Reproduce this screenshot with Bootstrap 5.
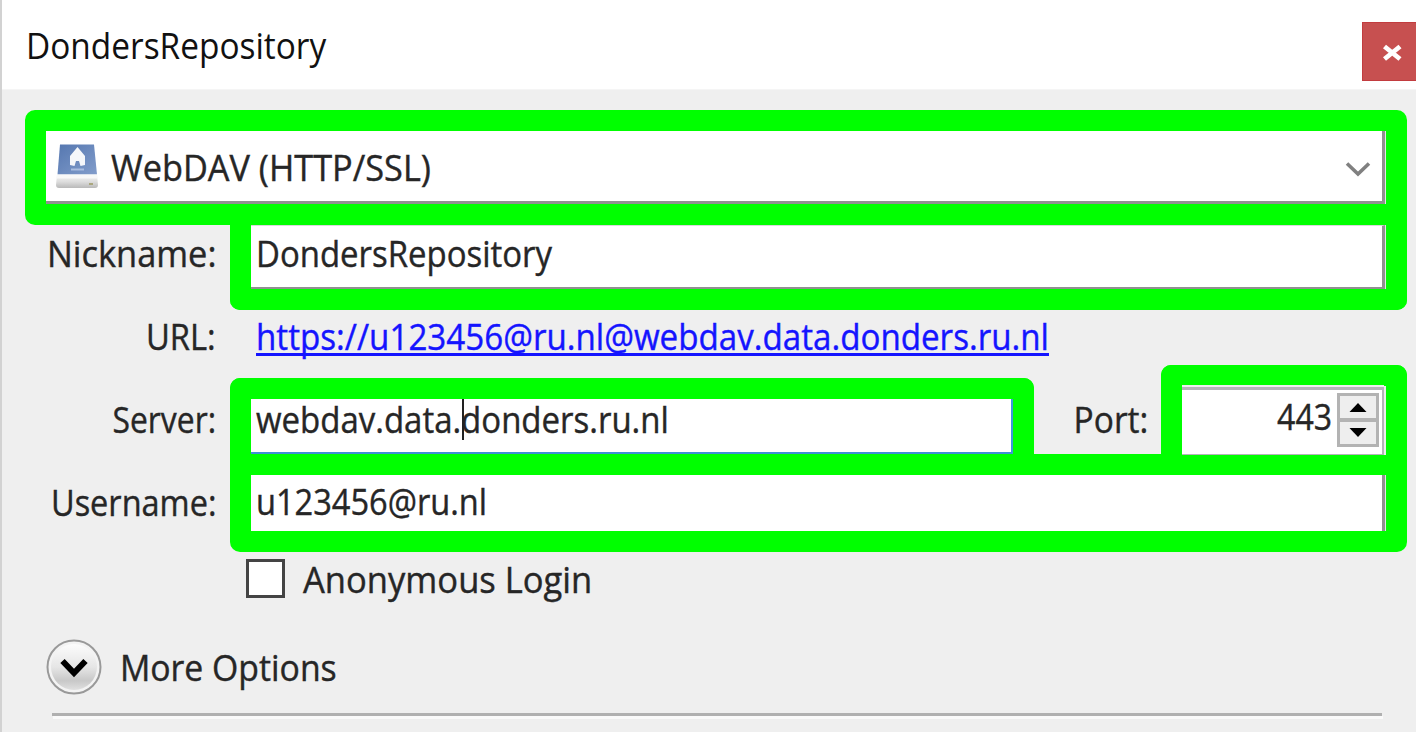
<!DOCTYPE html>
<html lang="en">
<head>
<meta charset="utf-8">
<title>DondersRepository</title>
<link rel="stylesheet" href="https://cdn.jsdelivr.net/npm/bootstrap@5.3.0/dist/css/bootstrap.min.css">
<style>
body{font-family:"Open Sans",sans-serif;font-size:36px;line-height:50px;color:#262626;background:#efefef;overflow:hidden}
.window{height:732px;border-left:2px solid #d2d2d2}
.titlebar{height:90px;color:#111;border-bottom:1px solid #f5f5f5;padding:15px 0 0 24px}
.closer{width:54px;height:59px;margin-top:7px;background:#c75050;border:1px solid #c23c3f;border-right:0;padding:0;border-radius:0}
.tx{display:inline-block;white-space:nowrap;transform-origin:0 50%}
.tx-end{transform-origin:100% 50%}
.form-area{padding:20px 9px 0 23px;-webkit-text-stroke:.4px currentColor}
.mark-box{border:21px solid #0f0;border-radius:10px}
.fill-box{background:#fff;border:0 solid #909090;border-right-width:3px;box-shadow:1px 0 #e6e6e6;margin-right:1px}
.protocol{height:115px;border-bottom-right-radius:0}
.protocol .fill-box{border-bottom-width:3px;height:73px;padding-left:8px}
.protocol .tx{padding:4px 0 0 1px}
.protocol svg:last-child{margin:5px 11px 0 0}
.lab{width:205px;padding-right:14px;text-align:right;flex:none}
.nick{height:85px}
.nick .mark-box{border-top-width:0;border-top-left-radius:0;border-top-right-radius:0;height:85px}
.nick .fill-box{height:64px;border-bottom-width:2px;border-top:1px solid #d9d9d9;padding:3px 0 0 5px}
.url{height:55px;padding-top:2px}
.url .tx-link{color:#1414ff;text-decoration:underline;text-decoration-thickness:3px;text-underline-offset:3px;text-decoration-skip-ink:none;margin-left:26px}
.server{height:89px}
.server .lab,.portlab{padding-top:30px}
.portlab{padding-right:13px}
.server-box{width:804px;height:76px;border-bottom-width:0;border-bottom-left-radius:0;border-bottom-right-radius:0}
.server-box .fill-box{height:55px;border-right:2px solid #3f96dc;border-bottom:2px solid #3f8fd5;margin:0;box-shadow:none;padding-left:5px}
.server-box .tx{display:block;line-height:42px}
.caret{width:2px;height:41px;left:211px;top:0;background:#222}
.port-box{width:246px;height:89px;border-bottom-width:0;border-bottom-left-radius:0;border-bottom-right-radius:0}
.port-box .fill-box{height:68px;border:solid #b4b4b9;border-width:3px 2px 1px 0;margin-right:2px;box-shadow:2px 0 #eee,0 -2px #eee;position:relative;top:1px}
.port-box .tx{padding:2px 3px 0 0}
.spin{width:42px;height:54px;margin:3px 3px 0 2px;border:3px solid #b3b3b3;background:#b3b3b3}
.spin div{background:#eee;width:36px}
.user{height:98px}
.user .mark-box{height:98px;border-top-left-radius:0;border-top-right-radius:0}
.user .fill-box{height:56px;padding:2px 0 0 5px}
.anon{padding:8px 0 0 221px;height:81px}
.anon .tx{line-height:40px;margin-left:18px}
.checker.form-check-input[type=checkbox]{width:39px;height:39px;border:3px solid #444;background:#fff;border-radius:0;margin:-1px 0 0;flex:none}
.more{padding:5px 0 0 21px;height:80px}
.more .tx{padding:5px 0 0 2px}
.rule{height:3px;background:#b0b0b0;margin:0 25px 0 27px;box-shadow:1px 3px #fafafa}
</style>
</head>
<body>
<div class="window">
  <header class="titlebar bg-white d-flex justify-content-between align-items-start">
    <span class="tx pt-1 lh-base" style="transform:scaleX(.928)">DondersRepository</span>
    <button class="btn closer" aria-label="Close">
      <svg class="d-block" width="53" height="57" viewBox="0 0 53 57"><path d="M21.500 23.500 37 36M37 23.500 21.500 36" stroke="#fff" stroke-width="4.800"/></svg>
    </button>
  </header>
  <main class="form-area">
    <div class="mark-box protocol">
      <div class="fill-box d-flex align-items-center">
        <svg width="48" height="48" viewBox="0 0 48 48">
          <defs><linearGradient id="drive" x1="0" y1="0" x2="1" y2="1"><stop stop-color="#5577b0"/><stop offset="1" stop-color="#829dcb"/></linearGradient>
          <linearGradient id="base" x1="0" y1="0" x2="0" y2="1"><stop stop-color="#f3f3f3"/><stop offset=".5" stop-color="#dedede"/><stop offset="1" stop-color="#b9b9b9"/></linearGradient></defs>
          <path d="M3 33h40l1 10q0 3-3 3H5q-3 0-3-3z" fill="url(#base)"/>
          <path d="M6 2.500h34l3 30H3.500z" fill="url(#drive)"/>
          <path d="M3 32.500h40l.5 4h-41z" fill="#f8f8f8"/>
          <path d="M23.500 5 31 14v9l-4.500 1-1.500-5h-3l-1.500 5-4.500-1v-9z" fill="#f5f7fa"/>
          <path d="M17 27.500h13" stroke="#a9bde0" stroke-width="2"/><path d="M35 42h4" stroke="#aaa77f" stroke-width="2"/>
        </svg>
        <span class="tx ms-2 me-auto" style="transform:scaleX(.953)">WebDAV (HTTP/SSL)</span>
        <svg width="26" height="18" viewBox="0 0 26 18"><path d="M2 3.500 13 14 24 3.500" fill="none" stroke="#808080" stroke-width="3.600"/></svg>
      </div>
    </div>
    <div class="nick d-flex">
      <div class="lab pt-1"><span class="tx tx-end" style="transform:scaleX(.955)">Nickname:</span></div>
      <div class="mark-box flex-grow-1"><div class="fill-box"><span class="tx" style="transform:scaleX(.915)">DondersRepository</span></div></div>
    </div>
    <div class="url d-flex">
      <div class="lab"><span class="tx tx-end" style="transform:scaleX(.91)">URL:</span></div>
      <div><a href="#" class="tx tx-link" style="transform:scaleX(.921)">https://u123456@ru.nl@webdav.data.donders.ru.nl</a></div>
    </div>
    <div class="server d-flex">
      <div class="lab"><span class="tx tx-end" style="transform:scaleX(.885)">Server:</span></div>
      <div class="mark-box server-box align-self-end"><div class="fill-box position-relative"><span class="tx" style="transform:scaleX(.916)">webdav.data.donders.ru.nl</span><i class="caret position-absolute"></i></div></div>
      <div class="flex-grow-1 text-end portlab"><span class="tx tx-end" style="transform:scaleX(.93)">Port:</span></div>
      <div class="mark-box port-box">
        <div class="fill-box d-flex justify-content-end">
          <span class="tx tx-end" style="transform:scaleX(.89)">443</span>
          <div class="spin d-flex flex-column justify-content-between">
            <div><svg class="d-block" width="36" height="22" viewBox="0 0 36 22"><path d="M9.500 16 18 7 26.500 16z"/></svg></div>
            <div><svg class="d-block" width="36" height="22" viewBox="0 0 36 22"><path d="M9.500 6 18 15 26.500 6z"/></svg></div>
          </div>
        </div>
      </div>
    </div>
    <div class="user d-flex">
      <div class="lab pt-4"><span class="tx tx-end" style="transform:scaleX(.902)">Username:</span></div>
      <div class="mark-box flex-grow-1"><div class="fill-box"><span class="tx" style="transform:scaleX(.905)">u123456@ru.nl</span></div></div>
    </div>
    <label class="anon d-flex align-items-start">
      <input type="checkbox" class="checker form-check-input">
      <span class="tx" style="transform:scaleX(.96)">Anonymous Login</span>
    </label>
    <div class="more d-flex align-items-start">
      <svg width="56" height="58" viewBox="0 0 56 58">
        <defs><linearGradient id="knob" x1="0" y1="0" x2="0" y2="1"><stop stop-color="#fcfcfc"/><stop offset=".5" stop-color="#e6e6e6"/><stop offset=".8" stop-color="#c8c8c8"/><stop offset="1" stop-color="#e0e0e0"/></linearGradient></defs>
        <circle cx="28" cy="29" r="26.500" fill="#f3f3f3" stroke="#999" stroke-width="2"/><circle cx="28" cy="29" r="23" fill="url(#knob)"/>
        <path d="M16.500 23 28 35 39.500 23" fill="none" stroke="#000" stroke-width="6"/>
      </svg>
      <span class="tx ms-3" style="transform:scaleX(.938)">More Options</span>
    </div>
    <div class="rule"></div>
  </main>
</div>
<script src="https://cdn.jsdelivr.net/npm/bootstrap@5.3.0/dist/js/bootstrap.bundle.min.js"></script>
</body>
</html>
